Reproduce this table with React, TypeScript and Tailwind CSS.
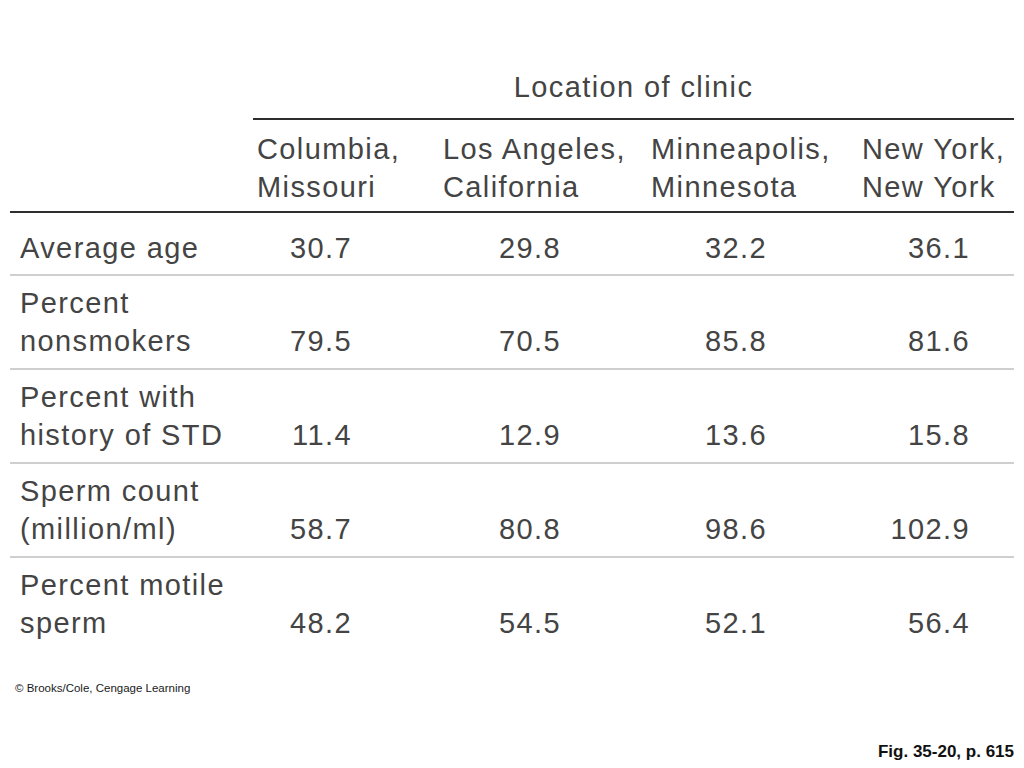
const rows: { label: string[]; values: string[] }[] = [
  { label: ["Average age"], values: ["30.7", "29.8", "32.2", "36.1"] },
  { label: ["Percent", "nonsmokers"], values: ["79.5", "70.5", "85.8", "81.6"] },
  { label: ["Percent with", "history of STD"], values: ["11.4", "12.9", "13.6", "15.8"] },
  { label: ["Sperm count", "(million/ml)"], values: ["58.7", "80.8", "98.6", "102.9"] },
  { label: ["Percent motile", "sperm"], values: ["48.2", "54.5", "52.1", "56.4"] },
]

const headers = [
  ["Columbia,", "Missouri"],
  ["Los Angeles,", "California"],
  ["Minneapolis,", "Minnesota"],
  ["New York,", "New York"],
]

// right padding of each value column, so the numbers end where the figure puts them
const valuePad = ["pr-[91px]", "pr-[90px]", "pr-[95px]", "pr-[44px]"]

export default function App() {
  return (
    <div className="w-[1024px] h-[768px] bg-white flex flex-col font-['Liberation_Sans',Arial,sans-serif]">
      <div className="px-[10px] pt-[68px] text-[29px] leading-[38px] tracking-[1.4px] text-[#444]">
        {/* Spanning header */}
        <div className="ml-[243px] pb-[12px] border-b-2 border-[#2e2e2e] text-center">Location of clinic</div>

        {/* Column headers */}
        <div className="grid grid-cols-[247px_186px_208px_211px_152px] pt-[10px] pb-[5px] border-b-2 border-[#2e2e2e]">
          <div />
          {headers.map((h) => (
            <div key={h[0]}>
              {h.map((line) => (
                <div key={line}>{line}</div>
              ))}
            </div>
          ))}
        </div>

        {/* Data rows */}
        {rows.map((row, i) => (
          <div
            key={row.label[0]}
            className={
              "grid grid-cols-[247px_186px_208px_211px_152px] items-end " +
              (i === 0 ? "pt-[16px] pb-[7px] " : "pt-[8px] pb-[8px] ") +
              (i < rows.length - 1 ? "border-b-2 border-[#cfcfcf]" : "")
            }
          >
            <div className="pl-[10px]">
              {row.label.map((line) => (
                <div key={line}>{line}</div>
              ))}
            </div>
            {row.values.map((v, j) => (
              <div key={j} className={"text-right " + valuePad[j]}>
                {v}
              </div>
            ))}
          </div>
        ))}
      </div>

      <div className="pl-[15px] mt-[31px] text-[11.5px] leading-[14px] text-[#1a1a1a]">
        © Brooks/Cole, Cengage Learning
      </div>

      <div className="pr-[10px] mt-[47px] text-right text-[17px] leading-[20px] font-bold text-[#111]">
        Fig. 35-20, p. 615
      </div>
    </div>
  )
}
